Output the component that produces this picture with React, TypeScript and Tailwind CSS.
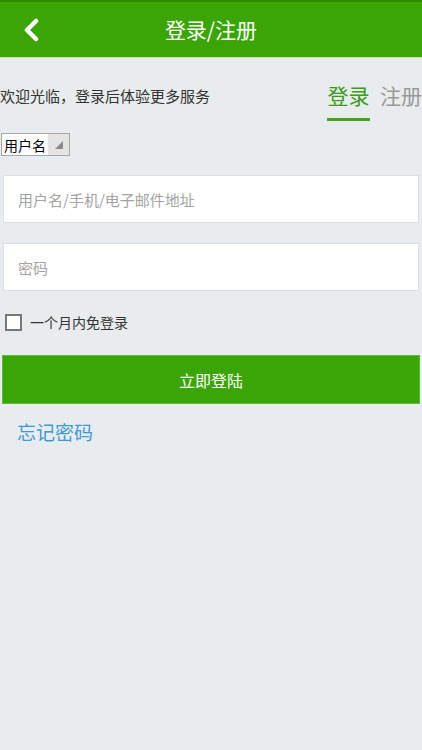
import React, { useState } from 'react';

const font = { fontFamily: '"Noto Sans CJK SC", "Noto Sans", sans-serif' };

const App: React.FC = () => {
  const [tab, setTab] = useState<'login' | 'register'>('login');
  const [remember, setRemember] = useState(false);

  return (
    <div className="min-h-[750px] w-[422px] bg-[#e9ecef]" style={font}>
      {/* header */}
      <div className="relative flex h-[58px] items-center justify-center border-t-2 border-[#2f8a04] border-b border-b-[#c8e0b8] bg-[#3aa505]">
        <button className="absolute left-[20px] top-[14px] flex h-[28px] w-[22px] items-center justify-center">
          <svg width="16" height="24" viewBox="0 0 16 24" fill="none">
            <path d="M13 3 L4 12 L13 21" stroke="white" strokeWidth="4.5" strokeLinecap="round" strokeLinejoin="round" />
          </svg>
        </button>
        <h1 className="text-[21px] leading-none text-white">登录/注册</h1>
      </div>

      {/* welcome + tabs */}
      <div className="flex items-start justify-between pt-[22px]">
        <p className="pt-[5px] text-[15px] text-[#333]">欢迎光临，登录后体验更多服务</p>
        <div className="flex gap-[10px]">
          <button
            onClick={() => setTab('login')}
            className={`flex flex-col items-center text-[21px] leading-[30px] ${tab === 'login' ? 'text-[#3a9b18]' : 'text-[#999]'}`}
          >
            登录
            <span className={`mt-[8px] h-[3px] w-[43px] ${tab === 'login' ? 'bg-[#4aa31f]' : 'bg-transparent'}`} />
          </button>
          <button
            onClick={() => setTab('register')}
            className={`flex w-[42px] flex-col items-start overflow-hidden whitespace-nowrap text-[21px] leading-[30px] ${tab === 'register' ? 'text-[#3a9b18]' : 'text-[#999]'}`}
          >
            注册
            <span className={`mt-[8px] h-[3px] w-[43px] ${tab === 'register' ? 'bg-[#4aa31f]' : 'bg-transparent'}`} />
          </button>
        </div>
      </div>

      {/* select */}
      <div className="pl-[1px] pt-[12px]">
        <div className="flex h-[23px] w-[69px] items-center border border-[#a8a8a8] bg-[#e4e4e4]">
          <span className="flex h-full items-center bg-white px-[2px] text-[14px] leading-none text-black">用户名</span>
          <span className="flex flex-1 items-center justify-center">
            <svg width="10" height="10" viewBox="0 0 10 10">
              <path d="M9 1 L9 9 L1 9 Z" fill="#8a8a8a" />
            </svg>
          </span>
        </div>
      </div>

      {/* inputs */}
      <div className="flex flex-col gap-[20px] px-[3px] pt-[19px]">
        <input
          className="h-[48px] w-full border border-[#dcdfe2] bg-white px-[14px] text-[15px] text-[#333] outline-none placeholder:text-[#a3a3a3]"
          placeholder="用户名/手机/电子邮件地址"
        />
        <input
          type="password"
          className="h-[48px] w-full border border-[#dcdfe2] bg-white px-[14px] text-[15px] text-[#333] outline-none placeholder:text-[#a3a3a3]"
          placeholder="密码"
        />
      </div>

      {/* remember */}
      <label className="flex items-center gap-[8px] pl-[5px] pt-[21px]">
        <input
          type="checkbox"
          checked={remember}
          onChange={(e) => setRemember(e.target.checked)}
          className="h-[17px] w-[17px] appearance-none border-2 border-[#777] bg-white"
        />
        <span className="text-[14px] text-[#333]">一个月内免登录</span>
      </label>

      {/* submit */}
      <div className="px-[2px] pt-[22px]">
        <button className="h-[49px] w-full border border-[#5cb83a] bg-[#3aa505] text-[16px] text-white">
          立即登陆
        </button>
      </div>

      <div className="pl-[17px] pt-[14px]">
        <a className="text-[19px] text-[#3d9ad6]">忘记密码</a>
      </div>
    </div>
  );
};

export default App;
